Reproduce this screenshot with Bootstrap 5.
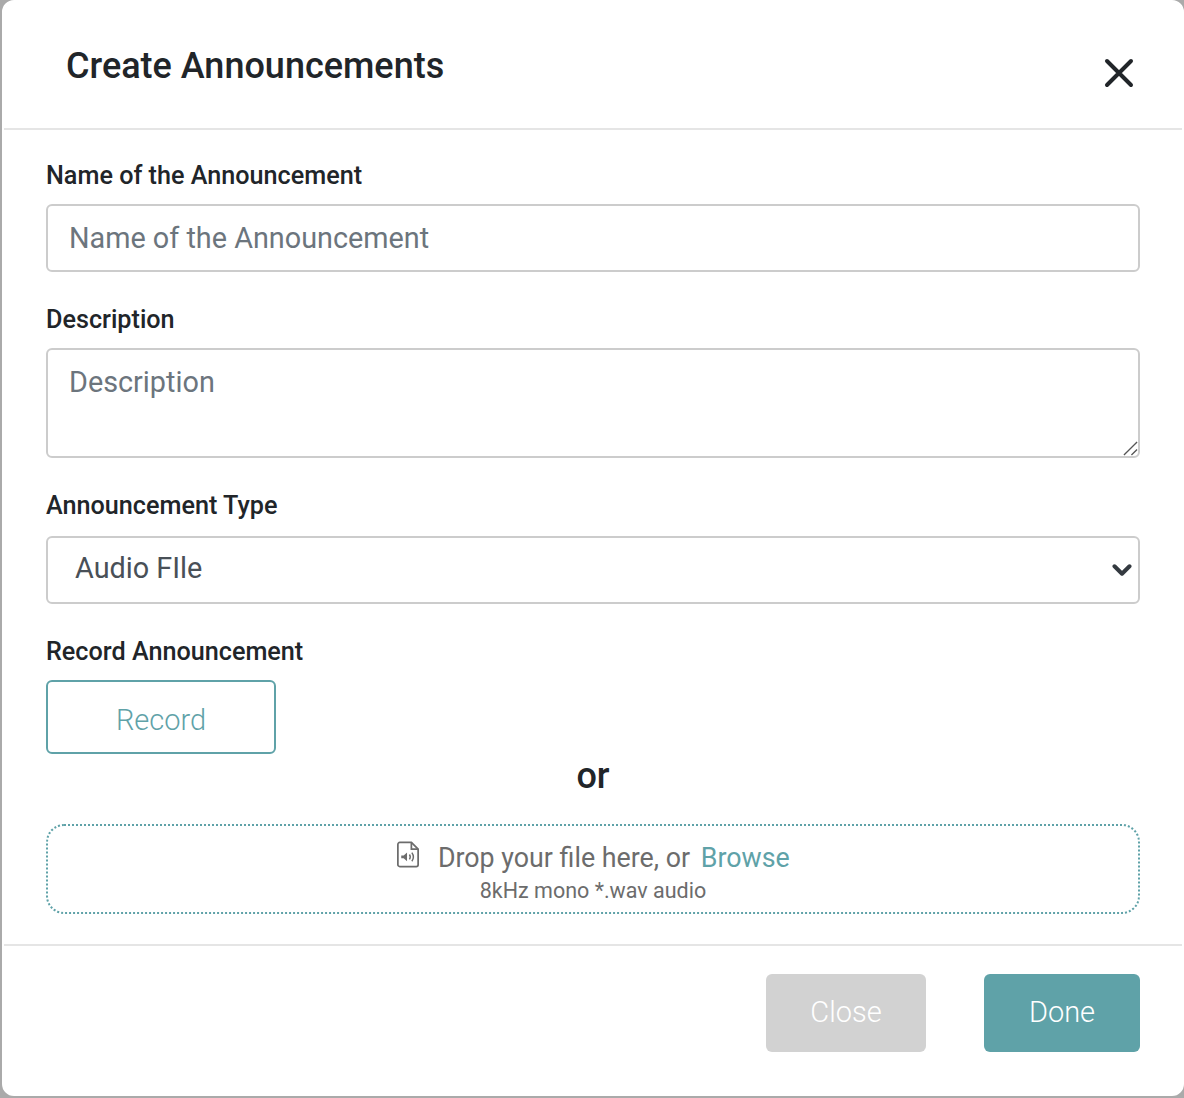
<!DOCTYPE html>
<html lang="en">
<head>
    <meta charset="UTF-8">
    <meta name="viewport" content="width=device-width, initial-scale=1.0">
    <title>Create Announcements</title>
    <link rel="stylesheet" href="https://cdn.jsdelivr.net/npm/bootstrap@5.3.0/dist/css/bootstrap.min.css">
    <style>
        html, body { height: 1098px; overflow: hidden; }
        body { background: #aaa; font-family: Roboto, sans-serif; color: #212529; }
        .dialog-box { width: 1182px; height: 1096px; margin-left: 2px; border: 2px solid #fff; border-radius: 12px; background: #fff; display: block; }
        .dialog-head { height: 128px; padding: 0 48px 0 62px; border-bottom: 2px solid #e5e5e5; border-radius: 0; align-items: flex-start; }
        .dialog-head h5 { font-size: 36px; font-weight: 500; line-height: 42px; margin: 43px 0 0; }
        .close-x { margin-top: 56px; width: 30px; height: 30px; border: 0; background: none; padding: 0; line-height: 0; }
        .dialog-body { padding: 30px 42px 0 42px; height: 814px; flex: none; }
        .field-label { font-size: 25.2px; font-weight: 500; line-height: 32px; margin-bottom: 12px; display: block; }
        .field { margin-bottom: 32px; }
        .label-type { margin-bottom: 14px; }
        .field-input { height: 68px; border: 2px solid #ccc; border-radius: 6px; font-size: 28.8px; padding: 0 21px; color: #495057; box-shadow: none; }
        textarea.field-input { height: 110px; padding-top: 11px; }
        textarea.field-input::-webkit-resizer {
            background: url("data:image/svg+xml,%3csvg xmlns='http://www.w3.org/2000/svg' viewBox='0 0 16 16'%3e%3cpath d='M1 15 15 1M9 15l6-6' fill='none' stroke='%23555' stroke-width='1.4'/%3e%3c/svg%3e") no-repeat center / 100% 100%;
        }
        select.field-input {
            padding: 0 0 2px 27px;
            background-image: url("data:image/svg+xml,%3csvg xmlns='http://www.w3.org/2000/svg' viewBox='0 0 16 16'%3e%3cpath fill='none' stroke='%23343a40' stroke-linecap='round' stroke-linejoin='round' stroke-width='3.2' d='m2 5 6 6 6-6'/%3e%3c/svg%3e");
            background-size: 20px 20px;
            background-position: right 6px center;
        }
        .field-input::placeholder { color: #6c757d; }
        .record-btn { width: 230px; height: 74px; padding: 7px 0 0; border: 2px solid #5fa2a8; border-radius: 6px; color: #5fa2a8; font-size: 29px; font-weight: 300; background: #fff; display: block; }
        .or-text { font-size: 36px; font-weight: 500; line-height: 44px; text-align: center; margin-bottom: 26px; }
        .drop-area { height: 90px; border: 2px dotted #5fa2a8; border-radius: 18px; color: #6c6c6c; text-align: center; padding-top: 13px; }
        .drop-main { font-size: 26.8px; line-height: 38px; }
        .drop-main svg { margin-right: 11px; vertical-align: -1px; }
        .drop-main a { color: #5fa2a8; text-decoration: none; margin-left: 4px; }
        .drop-sub { font-size: 21.5px; line-height: 27px; }
        .dialog-foot { height: 150px; padding: 28px 42px 0 0; border-top: 2px solid #e5e5e5; border-radius: 0; align-items: flex-start; gap: 58px; justify-content: flex-end; flex-wrap: nowrap; }
        .dialog-foot .btn { height: 78px; margin: 0; border: 0; border-radius: 6px; font-size: 29px; font-weight: 300; color: #fff; }
        .btn-shut { width: 160px; background: #d2d2d2; }
        .btn-done { width: 156px; background: #5fa2a8; }
    </style>
</head>
<body>
    <div class="modal-content dialog-box">
        <div class="modal-header dialog-head">
            <h5 class="modal-title">Create Announcements</h5>
            <button type="button" class="close-x" aria-label="Close">
                <svg width="30" height="30" viewBox="0 0 30 30"><path d="M3 3 L27 27 M27 3 L3 27" stroke="#212529" stroke-width="4" stroke-linecap="round"/></svg>
            </button>
        </div>
        <div class="modal-body dialog-body">
            <form>
                <div class="field">
                    <label class="form-label field-label" for="nome">Name of the Announcement</label>
                    <input type="text" class="form-control field-input" id="nome" placeholder="Name of the Announcement">
                </div>
                <div class="field">
                    <label class="form-label field-label" for="descricao">Description</label>
                    <textarea class="form-control field-input" id="descricao" placeholder="Description"></textarea>
                </div>
                <div class="field">
                    <label class="form-label field-label label-type" for="tipo">Announcement Type</label>
                    <select class="form-select field-input" id="tipo">
                        <option>Audio FIle</option>
                    </select>
                </div>
                <label class="form-label field-label">Record Announcement</label>
                <button type="button" class="btn record-btn">Record</button>
                <div class="or-text">or</div>
                <div class="drop-area">
                    <div class="drop-main">
                        <svg width="24" height="27" viewBox="0 0 24 28" fill="none" stroke="#6c6c6c" stroke-width="1.8">
                            <path d="M4 1.5 H15.5 L22.5 8.5 V24.5 A2 2 0 0 1 20.5 26.5 H3.5 A2 2 0 0 1 1.5 24.5 V3.5 A2 2 0 0 1 3.5 1.5 Z"/>
                            <path d="M15.5 1.5 V8.5 H22.5"/>
                            <path d="M5 15 H7.5 L11 12 V21 L7.5 18 H5 Z" fill="#6c6c6c" stroke="none"/>
                            <path d="M13.5 14 Q15.2 16.5 13.5 19 M16 12 Q19.2 16.5 16 21" stroke-width="1.5"/>
                        </svg>
                        Drop your file here, or <a href="#">Browse</a>
                    </div>
                    <div class="drop-sub">8kHz mono *.wav audio</div>
                </div>
            </form>
        </div>
        <div class="modal-footer dialog-foot">
            <button type="button" class="btn btn-shut">Close</button>
            <button type="button" class="btn btn-done">Done</button>
        </div>
    </div>
    <script src="https://cdn.jsdelivr.net/npm/bootstrap@5.3.0/dist/js/bootstrap.bundle.min.js"></script>
</body>
</html>
